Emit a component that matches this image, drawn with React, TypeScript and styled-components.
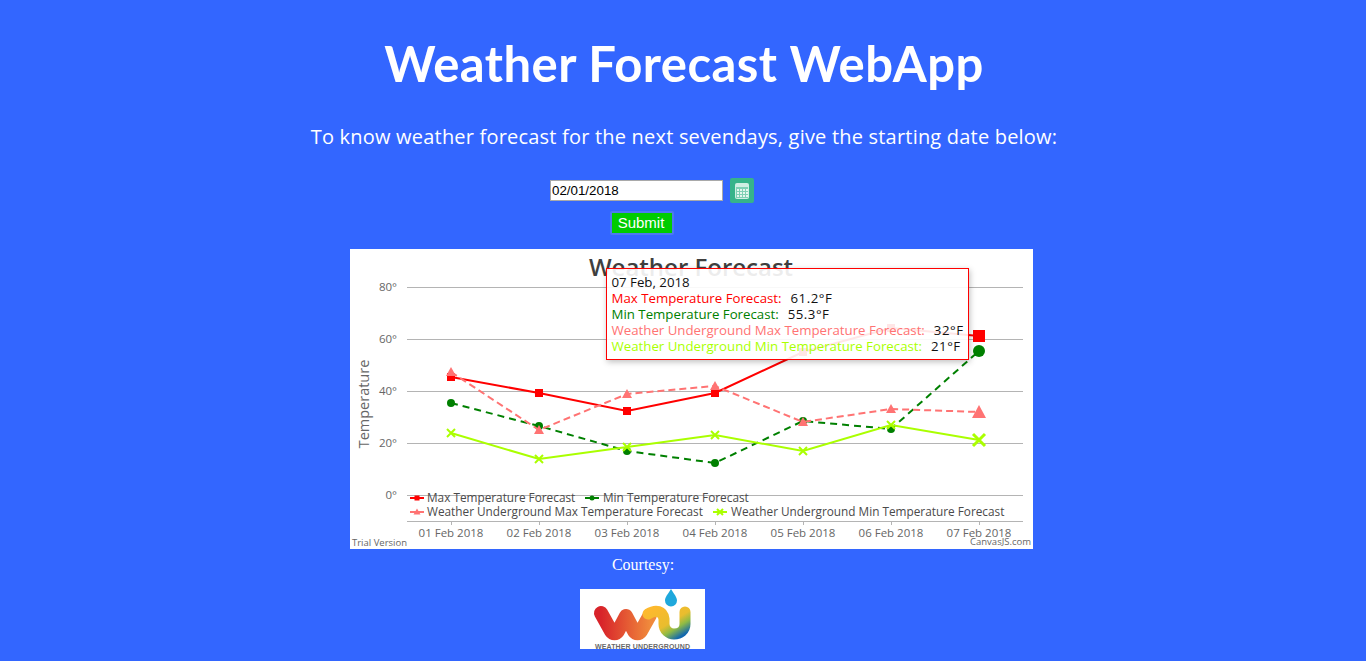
import React from "react";
import styled, { createGlobalStyle } from "styled-components";

const GlobalStyle = createGlobalStyle`
  html, body {
    margin: 0;
    height: 100%;
    background: #3366ff;
  }
`;

const Page = styled.div`
  display: flex;
  flex-direction: column;
  align-items: center;
  height: 661px;
  overflow: hidden;
  color: #fff;
  font-family: "Open Sans", "DejaVu Sans", sans-serif;
`;

const Title = styled.h1`
  margin: 32px 0 0 2px;
  height: 62px;
  font-family: Lato, "Open Sans", sans-serif;
  font-size: 49px;
  line-height: 62px;
  font-weight: 700;
  letter-spacing: 0.45px;
  white-space: nowrap;
`;

const Intro = styled.p`
  margin: 28px 0 0 2px;
  height: 30px;
  font-size: 20px;
  line-height: 30px;
  letter-spacing: 0.2px;
  white-space: nowrap;
`;

const DateRow = styled.form`
  display: flex;
  align-items: center;
  gap: 7px;
  margin: 26px 0 0 -62px;
  height: 25px;
`;

const DateInput = styled.input`
  box-sizing: border-box;
  width: 173px;
  height: 21px;
  padding: 0 1px;
  border: 1px solid #a9a9a9;
  background: #fff;
  color: #000;
  font: 13.33px "Liberation Sans", Arial, sans-serif;
`;

const CalendarButton = styled.button`
  display: flex;
  align-items: center;
  justify-content: center;
  width: 24px;
  height: 25px;
  padding: 0;
  border: 0;
  border-radius: 2px;
  background: #36b38a;
`;

const SubmitButton = styled.button`
  box-sizing: border-box;
  margin: 8px 0 0 -82px;
  width: 64px;
  height: 24px;
  padding: 0 2px 2px 0;
  border: 2px solid #4d79f0;
  border-radius: 2px;
  background: #00cc00;
  color: #fff;
  font: 15px "Liberation Sans", Arial, sans-serif;
`;

const ChartCard = styled.div`
  position: relative;
  margin: 14px 0 0 16px;
  width: 683px;
  height: 300px;
  background: #fff;
`;

const ChartSvg = styled.svg`
  display: block;
  font-family: "Open Sans", "DejaVu Sans", sans-serif;
`;

const ChartTitle = styled.text`
  font-size: 24px;
  font-weight: 600;
  fill: #3f3f3f;
  text-anchor: middle;
`;

const AxisLabel = styled.text<{ $anchor?: string }>`
  font-size: 11.5px;
  fill: #666;
  text-anchor: ${(p) => p.$anchor ?? "middle"};
`;

const AxisTitle = styled.text`
  font-size: 14.5px;
  fill: #666;
  text-anchor: middle;
`;

const LegendLabel = styled.text`
  font-size: 11.8px;
  fill: #4a4a4a;
`;

const Credit = styled.text<{ $anchor?: string }>`
  font-size: 9.5px;
  fill: #666;
  text-anchor: ${(p) => p.$anchor ?? "start"};
`;

const Tooltip = styled.div`
  position: absolute;
  left: 256px;
  top: 19px;
  box-sizing: border-box;
  width: 363px;
  height: 92px;
  padding: 5px 5px;
  border: 1px solid #ff0000;
  background: rgba(255, 255, 255, 0.9);
  box-shadow: 1px 2px 6px rgba(0, 0, 0, 0.25);
  color: #111;
  font-size: 13.25px;
  line-height: 16px;
  white-space: nowrap;
`;

const TooltipRow = styled.div``;

const TooltipName = styled.span<{ $color: string }>`
  color: ${(p) => p.$color};
`;

const TooltipValue = styled.span`
  margin-left: 9px;
  letter-spacing: 0.5px;
`;

const CourtesyText = styled.div`
  margin: 7px 0 0 -80px;
  height: 17px;
  font: 16px/17px "Liberation Serif", "Times New Roman", serif;
`;

const LogoBox = styled.div`
  margin: 16px 0 0 -82px;
  width: 125px;
  height: 60px;
  background: #fff;
  overflow: hidden;
`;

const LogoCaption = styled.text`
  font-family: "Liberation Sans", Arial, sans-serif;
  font-size: 7px;
  font-weight: 700;
  fill: #6a6a6a;
`;

const xs = [101, 189, 277, 365, 453, 541, 629];

type Series = {
  name: string;
  color: string;
  dash?: string;
  marker: "square" | "circle" | "triangle" | "cross";
  ys: number[];
  value: string;
};

const series: Series[] = [
  { name: "Max Temperature Forecast", color: "#ff0000", marker: "square", ys: [128, 144, 162, 144, 103, 79, 87], value: "61.2°F" },
  { name: "Min Temperature Forecast", color: "#008000", dash: "7 5", marker: "circle", ys: [154, 177, 202, 214, 172, 180, 102], value: "55.3°F" },
  { name: "Weather Underground Max Temperature Forecast", color: "#ff7373", dash: "7 4", marker: "triangle", ys: [123, 181, 145, 137, 173, 160, 163], value: "32°F" },
  { name: "Weather Underground Min Temperature Forecast", color: "#aaff00", marker: "cross", ys: [184, 210, 198, 186, 202, 176, 191], value: "21°F" },
];

const Marker = ({ kind, x, y, r, color }: { kind: Series["marker"]; x: number; y: number; r: number; color: string }) => {
  if (kind === "square") return <rect x={x - r} y={y - r} width={r * 2} height={r * 2} fill={color} />;
  if (kind === "circle") return <circle cx={x} cy={y} r={r} fill={color} />;
  if (kind === "triangle") return <polygon points={`${x},${y - r - 1} ${x + r + 1},${y + r} ${x - r - 1},${y + r}`} fill={color} />;
  return (
    <path
      d={`M${x - r} ${y - r}L${x + r} ${y + r}M${x + r} ${y - r}L${x - r} ${y + r}`}
      stroke={color}
      strokeWidth={r > 5 ? 3 : 2}
      fill="none"
    />
  );
};

const legend = [
  { series: 0, lineX: 60, textX: 77, y: 249 },
  { series: 1, lineX: 235, textX: 253, y: 249 },
  { series: 2, lineX: 60, textX: 77, y: 263 },
  { series: 3, lineX: 363, textX: 381, y: 263 },
];

const WeatherChart = () => (
  <ChartSvg width={683} height={300} viewBox="0 0 683 300">
    <ChartTitle x={341} y={27}>Weather Forecast</ChartTitle>

    {[80, 60, 40, 20, 0].map((v) => {
      const y = 246 - v * 2.6;
      return (
        <g key={v}>
          <line x1={57} x2={673} y1={y + 0.5} y2={y + 0.5} stroke="#b4b4b4" />
          <AxisLabel x={47} y={y + 4} $anchor="end">{v}°</AxisLabel>
        </g>
      );
    })}

    <line x1={57} x2={673} y1={272.5} y2={272.5} stroke="#b4b4b4" />
    {xs.map((x, i) => (
      <g key={x}>
        <line x1={x + 0.5} x2={x + 0.5} y1={272} y2={276} stroke="#b4b4b4" />
        <AxisLabel x={x} y={288}>0{i + 1} Feb 2018</AxisLabel>
      </g>
    ))}

    <AxisTitle transform="translate(19 155) rotate(-90)">Temperature</AxisTitle>

    {series.map((s) => (
      <g key={s.name}>
        <polyline
          points={s.ys.map((y, i) => `${xs[i]},${y}`).join(" ")}
          fill="none"
          stroke={s.color}
          strokeWidth={2}
          strokeDasharray={s.dash}
        />
        {s.ys.map((y, i) => (
          <Marker key={xs[i]} kind={s.marker} x={xs[i]} y={y} r={i === 6 ? 6 : 4} color={s.color} />
        ))}
      </g>
    ))}

    {legend.map((l) => {
      const s = series[l.series];
      return (
        <g key={s.name}>
          <line x1={l.lineX} x2={l.lineX + 14} y1={l.y} y2={l.y} stroke={s.color} strokeWidth={2} />
          <Marker kind={s.marker} x={l.lineX + 7} y={l.y} r={s.marker === "cross" ? 3 : 2.5} color={s.color} />
          <LegendLabel x={l.textX} y={l.y + 4}>{s.name}</LegendLabel>
        </g>
      );
    })}

    <Credit x={2} y={297}>Trial Version</Credit>
    <Credit x={681} y={296} $anchor="end">CanvasJS.com</Credit>
  </ChartSvg>
);

const WeatherLogo = () => (
  <svg width={125} height={60} viewBox="0 0 125 60">
    <defs>
      <linearGradient id="wuW" x1="0" x2="1" y1="0" y2="0">
        <stop offset="0" stopColor="#d8232a" />
        <stop offset="1" stopColor="#f08a3c" />
      </linearGradient>
      <linearGradient id="wuU" x1="0" x2="1" y1="0" y2="1">
        <stop offset="0" stopColor="#fdb92e" />
        <stop offset="0.55" stopColor="#e9bd2e" />
        <stop offset="0.75" stopColor="#8fbb45" />
        <stop offset="1" stopColor="#1268ae" />
      </linearGradient>
    </defs>
    <path d="M21 24L31 42C33 45 36 45 38 42L46 27L54 42C56 45 59 45 61 42L70 26" fill="none" stroke="url(#wuW)" strokeWidth={14} strokeLinecap="round" strokeLinejoin="round" />
    <path d="M68 25C76 20 83 22 84 30V35C84 41 89 45 94 45C100 45 105 41 105 35V23" fill="none" stroke="url(#wuU)" strokeWidth={11} strokeLinecap="round" />
    <path d="M91 0C94 5 97 8 97 11.5A6 6 0 0 1 85 11.5C85 8 88 5 91 0Z" fill="#1fa8dc" />
    <LogoCaption x={15} y={60} textLength={95}>WEATHER UNDERGROUND</LogoCaption>
  </svg>
);

const CalendarIcon = () => (
  <svg width={14} height={16} viewBox="0 0 14 16">
    <rect x={0} y={0} width={14} height={16} rx={2} fill="#cfeee3" />
    <rect x={1} y={4} width={12} height={11} fill="#7fd0b5" />
    {[2, 5, 8, 11].map((x) =>
      [6, 9, 12].map((y) => <rect key={`${x}-${y}`} x={x} y={y} width={2} height={2} fill="#e4f6ef" />)
    )}
  </svg>
);

export default function App() {
  return (
    <>
      <GlobalStyle />
      <Page>
        <Title>Weather Forecast WebApp</Title>
        <Intro>To know weather forecast for the next sevendays, give the starting date below:</Intro>
        <DateRow>
          <DateInput type="text" defaultValue="02/01/2018" />
          <CalendarButton type="button" aria-label="Open calendar">
            <CalendarIcon />
          </CalendarButton>
        </DateRow>
        <SubmitButton type="button">Submit</SubmitButton>
        <ChartCard>
          <WeatherChart />
          <Tooltip>
            <TooltipRow>07 Feb, 2018</TooltipRow>
            {series.map((s) => (
              <TooltipRow key={s.name}>
                <TooltipName $color={s.color}>{s.name}:</TooltipName>
                <TooltipValue>{s.value}</TooltipValue>
              </TooltipRow>
            ))}
          </Tooltip>
        </ChartCard>
        <CourtesyText>Courtesy:</CourtesyText>
        <LogoBox>
          <WeatherLogo />
        </LogoBox>
      </Page>
    </>
  );
}
